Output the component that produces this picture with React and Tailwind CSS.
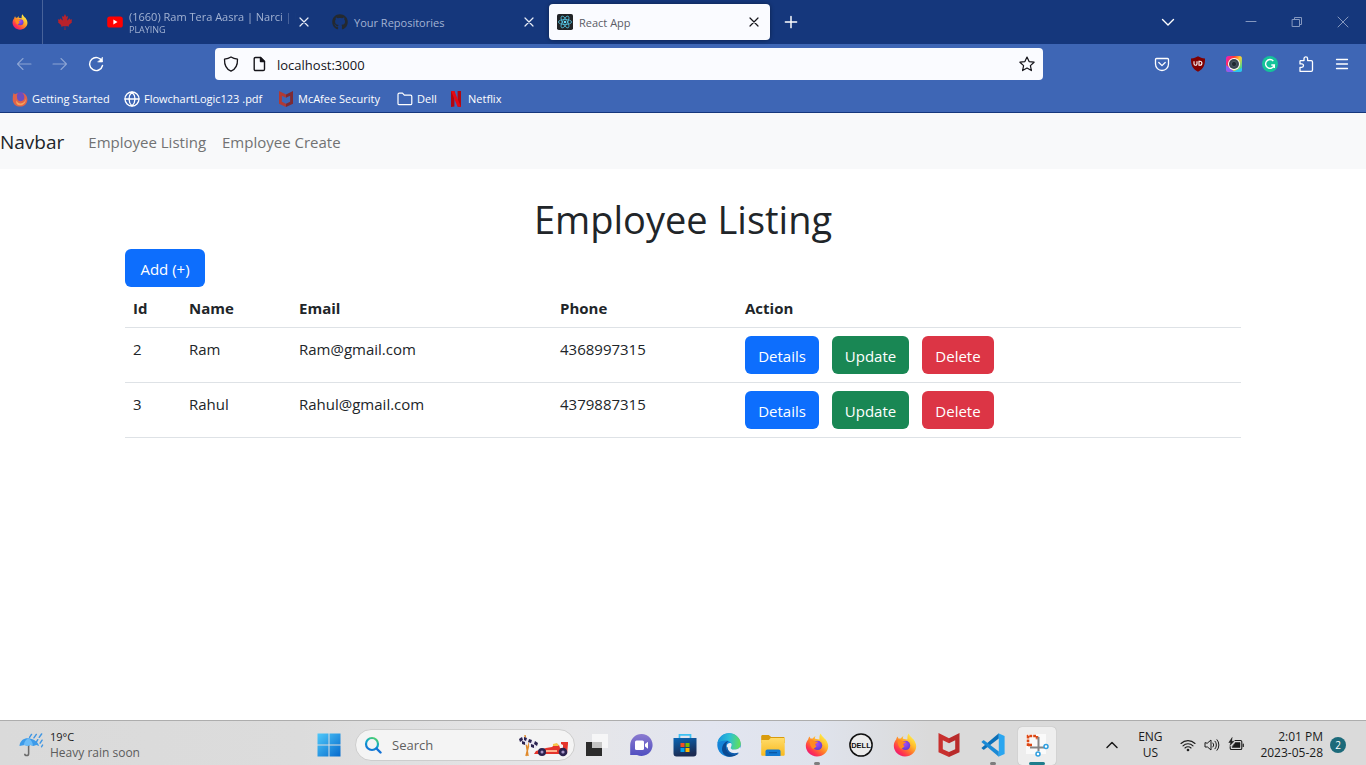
import React, { useId } from "react";
import { FaCanadianMapleLeaf, FaGithub } from "react-icons/fa";

function Firefox({ className }) {
  const id = useId();
  return (
    <svg viewBox="0 0 24 24" className={className} aria-hidden="true">
      <defs>
        <linearGradient id={id + "a"} x1="0.85" y1="0.1" x2="0.15" y2="0.95">
          <stop offset="0" stopColor="#fff04a" />
          <stop offset="0.3" stopColor="#ffbd2e" />
          <stop offset="0.55" stopColor="#ff7a2a" />
          <stop offset="0.8" stopColor="#ff3350" />
          <stop offset="1" stopColor="#e3157e" />
        </linearGradient>
        <radialGradient id={id + "b"} cx="0.45" cy="0.35" r="0.7">
          <stop offset="0" stopColor="#a54bf5" />
          <stop offset="1" stopColor="#5b3ad0" />
        </radialGradient>
      </defs>
      <path d="M3.3 6.2c.2-1.200.8-2.200 1.400-2.700.1 1 .5 1.700 1.100 2.200.5-.2 1.300-.3 2-.2.7-1.200 1.700-1.900 2.700-2.200-.6.9-.7 1.900-.5 2.500l4.400.7c.1-2-.3-3.900 1.300-6 1 2.600 2.700 3.500 3.900 5.300.7-.3 1.100.9 1.100.9 1.500 2 2.500 4.200 2.500 6.600 0 5.700-4.900 10.200-11.200 10.200S.8 18.600.8 12.800c0-2.600 1-4.900 2.500-6.600z" fill={`url(#${id}a)`} />
      <circle cx="12.600" cy="12.400" r="4.600" fill={`url(#${id}b)`} />
      <path d="M4.600 8c2-1.500 4.200-.9 5.400.6l2.900.2c-.1 1.300-1.700 1.600-2.500 2.200-.2.900.3 1.700 1.200 1.900-.6 1.600-2.600 1.900-3.600 3.200C5.600 14.200 4.800 11.200 4.600 8z" fill="#ff8a1f" />
    </svg>
  );
}

function OldFirefox({ className }) {
  return (
    <svg viewBox="0 0 16 16" className={className} aria-hidden="true">
      <circle cx="8.500" cy="7.500" r="6.500" fill="#6b4fc0" />
      <path d="M1.500 2c.6.6 1 .9 1.500 1.200C4 2.500 5 2.300 6 2.600 4.800 3.500 4.700 4.500 5 5.500c-.3 3 1.300 4.700 3.700 4.700 2.700 0 4.100-2.200 3.500-5.200-.3-1.400-1-2.400-2-3.300 3.300.9 5.200 3.600 5.200 6.700 0 4.200-3.200 7.200-7.400 7.200C3.800 15.600.7 12.500.7 8.400.7 6 .9 4 1.500 2z" fill="#e0634a" />
      <path d="M4.500 9.500c1 2.500 3.500 3.500 6 2.500 2-.8 3-2.600 3-4.500 1 3.500-1.600 6.800-5.300 6.800-3 0-4.600-2-3.700-4.800z" fill="#f3a35c" />
    </svg>
  );
}

function YouTube() {
  return (
    <svg viewBox="0 0 16 16" className="size-4 shrink-0" aria-hidden="true">
      <rect x="0.200" y="2.500" width="15.600" height="11" rx="2.600" fill="#f00" />
      <path d="M6.400 5.600v4.800L10.500 8z" fill="#fff" />
    </svg>
  );
}

function ReactLogo() {
  return (
    <svg viewBox="0 0 16 16" className="size-4 shrink-0" aria-hidden="true">
      <rect width="16" height="16" rx="1.800" fill="#222427" />
      <g fill="none" stroke="#53c1de" strokeWidth="0.800">
        <ellipse cx="8" cy="8" rx="6.600" ry="2.500" />
        <ellipse cx="8" cy="8" rx="6.600" ry="2.500" transform="rotate(60 8 8)" />
        <ellipse cx="8" cy="8" rx="6.600" ry="2.500" transform="rotate(120 8 8)" />
      </g>
      <circle cx="8" cy="8" r="1.300" fill="#61dafb" />
    </svg>
  );
}

function Line({ d, className, width = 1.3, box = "0 0 16 16", children }) {
  return (
    <svg viewBox={box} className={className} fill="none" stroke="currentColor" strokeWidth={width} strokeLinecap="round" strokeLinejoin="round" aria-hidden="true">
      <path d={d} />
      {children}
    </svg>
  );
}

const CROSS = "M4 4l8 8M12 4l-8 8";

function McAfee({ className, left = "#c8302e", right = "#a92427" }) {
  return (
    <svg viewBox="0 0 24 24" className={className} aria-hidden="true">
      <path d="M1.500 0L12 5.200v5L5.800 7.300v8.900L12 19v5L1.500 19.200z" fill={left} />
      <path d="M22.500 0L12 5.200v5l6.200-2.900v8.900L12 19v5l10.500-4.800z" fill={right} />
    </svg>
  );
}

function Netflix() {
  return (
    <svg viewBox="0 0 16 16" className="size-4 shrink-0" aria-hidden="true">
      <path d="M3 0h3.400v15.600L3 16zM9.600 0H13v16l-3.400-.4z" fill="#b1060f" />
      <path d="M3 0h3.400L13 16l-3.500-.4z" fill="#e50914" />
    </svg>
  );
}

function Tab({ icon, title, sub, active }) {
  return (
    <div className={"flex h-9 w-[221px] shrink-0 items-center gap-1.5 rounded-[4px] pl-2 pr-2 " + (active ? "bg-[#fafbff] text-[#5b5b66] shadow-[0_0_4px_rgba(0,0,0,0.4)]" : "text-[#a3b3d3]")}>
      {icon}
      <div className={"-mr-1.5 min-w-0 flex-1 whitespace-nowrap text-[11px] " + (sub ? "leading-4 [mask-image:linear-gradient(to_right,#000_90%,transparent)]" : "pt-0.5 leading-4")}>
        <div>{title}</div>
        {sub && <div className="text-[9px] leading-[10px]">{sub}</div>}
      </div>
      <button aria-label={"Close " + title} className={active ? "text-[#15141a]" : "text-[#e8edf7]"}>
        <Line d={CROSS} width={1.2} className="size-4" />
      </button>
    </div>
  );
}

function TabStrip() {
  return (
    <div className="flex h-11 items-center bg-[#15377c]">
      <button aria-label="Firefox View" className="flex h-11 w-[43px] shrink-0 items-center justify-center border-r border-[#48639a] pr-0.5">
        <Firefox className="size-4" />
      </button>
      <button aria-label="Pinned tab" className="mr-3 flex w-11 shrink-0 items-center justify-center">
        <FaCanadianMapleLeaf className="size-4 text-[#b9222b]" />
      </button>
      <div className="flex gap-1">
        <Tab icon={<YouTube />} title="(1660) Ram Tera Aasra | Narci | H" sub="PLAYING" />
        <Tab icon={<FaGithub className="size-4 shrink-0 text-[#24292f]" />} title="Your Repositories" />
        <Tab icon={<ReactLogo />} title="React App" active />
      </div>
      <button aria-label="New tab" className="ml-3 text-white">
        <Line d="M8 3v10M3 8h10" className="size-[18px]" />
      </button>
      <div className="ml-auto flex items-center text-[#8598bf]">
        <button aria-label="List all tabs" className="mr-[37px] flex w-[46px] justify-center text-white">
          <Line d="M2.500 5.500L8 11l5.500-5.500" width={1.4} className="size-4" />
        </button>
        <button aria-label="Minimize" className="flex w-[46px] justify-center">
          <Line d="M3 7.500h10" width={1} className="size-4" />
        </button>
        <button aria-label="Restore" className="flex w-[46px] justify-center">
          <Line d="M3.500 5.500h7v7h-7zM5.500 5.500v-2h7v7h-2" width={1} className="size-4" />
        </button>
        <button aria-label="Close window" className="flex w-[46px] justify-center">
          <Line d="M3 3l10 10M13 3L3 13" width={1} className="size-4" />
        </button>
      </div>
    </div>
  );
}

function ToolButton({ label, children, dim }) {
  return (
    <button aria-label={label} className={"flex h-8 w-9 shrink-0 items-center justify-center " + (dim ? "text-[#8ba3d3]" : "text-white")}>
      {children}
    </button>
  );
}

function Toolbar() {
  const hue = useId();
  return (
    <div className="flex h-9 items-end bg-[#3e66b5] px-1.5">
      <ToolButton label="Back" dim>
        <Line d="M15 8H1.500M7 2.500L1.500 8 7 13.500" width={1.1} className="size-4" />
      </ToolButton>
      <ToolButton label="Forward" dim>
        <Line d="M1 8h13.500M9 2.500L14.500 8 9 13.500" width={1.1} className="size-4" />
      </ToolButton>
      <ToolButton label="Reload">
        <Line d="M14 5.200A6.500 6.500 0 1 0 14.500 9.500" width={1.4} className="size-4">
          <path d="M14.500 1.500v4.500H10z" fill="currentColor" strokeWidth="0.600" />
        </Line>
      </ToolButton>
      <div className="ml-[101px] mr-[101px] flex h-8 flex-1 items-center rounded-[4px] bg-[#fafbff] px-2 text-[#15141a]">
        <Line d="M8 1c2 1.300 4 1.900 6.500 2.200C14.700 8.800 13 13 8 15.200 3 13 1.300 8.800 1.500 3.200 4 2.900 6 2.300 8 1z" className="size-4" />
        <Line d="M4.500 1.500h5l4 4v7.700c0 .8-.5 1.300-1.300 1.300H4.500c-.8 0-1.300-.5-1.300-1.300V2.800c0-.8.5-1.300 1.300-1.300z" width={1.4} className="ml-3 size-4">
          <path d="M9.500 1.500v4h4z" fill="currentColor" />
        </Line>
        <input aria-label="Address" defaultValue="localhost:3000" className="ml-2.5 h-8 min-w-0 flex-1 bg-transparent pt-0.5 text-[13px] outline-none" />
        <button aria-label="Bookmark this page">
          <Line d="M8 1l2.100 4.600 5 .6-3.700 3.400 1 5L8 12.100l-4.400 2.500 1-5L.9 6.200l5-.6z" width={1.2} className="size-4" />
        </button>
      </div>
      <ToolButton label="Pocket">
        <Line d="M2.500 2.500h11c.6 0 1 .4 1 1V8a6.500 6.500 0 0 1-13 0V3.500c0-.6.400-1 1-1zM4.800 6.500L8 9.600l3.200-3.100" className="size-4" />
      </ToolButton>
      <ToolButton label="uBlock">
        <svg viewBox="0 0 16 16" className="size-4" aria-hidden="true">
          <path d="M8 .3c2 1.300 4 2 7 2.200.1 6-1 10-7 13.200C2 12.500.9 8.500 1 2.500 4 2.300 6 1.600 8 .3z" fill="#800000" />
          <path d="M4 5.200v2.600a1.500 1.500 0 0 0 3 0V5.200M9 5.200v4h.9a2 2 0 0 0 0-4z" fill="none" stroke="#fff" strokeWidth="1.100" />
        </svg>
      </ToolButton>
      <ToolButton label="Camera">
        <svg viewBox="0 0 16 16" className="size-4" aria-hidden="true">
          <defs>
            <linearGradient id={hue} x1="0" y1="0.200" x2="1" y2="0.800">
              <stop offset="0" stopColor="#f01fb0" />
              <stop offset="0.300" stopColor="#ff3a30" />
              <stop offset="0.600" stopColor="#ffcf33" />
              <stop offset="1" stopColor="#24d6a0" />
            </linearGradient>
          </defs>
          <rect width="16" height="16" rx="2.500" fill={`url(#${hue})`} />
          <path d="M0 9v4.500A2.500 2.500 0 0 0 2.500 16H9z" fill="#8a5cf6" />
          <path d="M6 16h7.500a2.500 2.500 0 0 0 2.500-2.500V12z" fill="#2bc4f2" />
          <circle cx="8" cy="8" r="6" fill="#fff" />
          <circle cx="8" cy="8" r="5" fill="#3a4450" />
          <circle cx="8" cy="8" r="2.600" fill="#1f2831" stroke="#5d6875" strokeWidth="0.600" />
        </svg>
      </ToolButton>
      <ToolButton label="Grammarly">
        <svg viewBox="0 0 16 16" className="size-4" aria-hidden="true">
          <circle cx="8" cy="8" r="8" fill="#15c39a" />
          <path d="M11.300 5A4.400 4.400 0 1 0 12.300 9H9.300M12.300 9v3" fill="none" stroke="#fff" strokeWidth="1.400" />
        </svg>
      </ToolButton>
      <ToolButton label="Extensions">
        <Line d="M2 15.300v-4h1.800a1.700 1.700 0 0 0 0-3.400H2V5.200c0-.4.200-.6.600-.6H6V2.700a1.800 1.800 0 0 1 3.600 0v1.900h3.600c.8 0 1.300.5 1.300 1.300v8.100c0 .8-.5 1.300-1.300 1.300z" className="size-4" />
      </ToolButton>
      <ToolButton label="Menu">
        <Line d="M2.500 3.500h11M2.500 8h11M2.500 12.500h11" className="size-4" />
      </ToolButton>
    </div>
  );
}

function Bookmark({ icon, label, className }) {
  return (
    <a href="#bookmark" className={"flex shrink-0 items-center gap-1 whitespace-nowrap " + className}>
      {icon}
      {label}
    </a>
  );
}

function Bookmarks() {
  return (
    <nav aria-label="Bookmarks" className="flex h-[33px] items-center border-b border-[#15377c] bg-[#3e66b5] pl-3 pt-1.5 text-[11px] leading-4 text-white">
      <Bookmark className="w-28" icon={<OldFirefox className="size-4 shrink-0" />} label="Getting Started" />
      <Bookmark
        className="w-[154px]"
        icon={
          <Line d="M1 8h14M8 1C4 5 4 11 8 15M8 1c4 4 4 10 0 14" className="size-4 shrink-0">
            <circle cx="8" cy="8" r="7" />
          </Line>
        }
        label="FlowchartLogic123 .pdf"
      />
      <Bookmark className="w-[119px]" icon={<McAfee className="size-4 shrink-0" left="#b03a35" right="#7d2a33" />} label="McAfee Security" />
      <Bookmark
        className="w-[51px]"
        icon={<Line d="M1 3.500c0-.8.500-1.300 1.300-1.300h3.200l1.800 1.900h6.200c.8 0 1.300.5 1.300 1.300v7c0 .8-.5 1.300-1.300 1.300H2.300c-.8 0-1.300-.5-1.300-1.300z" width={1.2} className="size-4 shrink-0" />}
        label="Dell"
      />
      <Bookmark icon={<Netflix />} label="Netflix" className="" />
    </nav>
  );
}

const employees = [
  { id: 2, name: "Ram", email: "Ram@gmail.com", phone: "4368997315" },
  { id: 3, name: "Rahul", email: "Rahul@gmail.com", phone: "4379887315" },
];

const button = "h-[38px] rounded-md pt-0.5 text-center text-white ";

function Page() {
  return (
    <div className="flex-1 bg-white text-[15px] leading-[26px] text-[#212529]">
      <nav className="flex h-14 items-center bg-[#f8f9fa] pt-0.5 text-[#717273]">
        <a href="#home" className="mr-4 text-[19px] text-[#212529]">Navbar</a>
        <a href="#listing" className="px-2">Employee Listing</a>
        <a href="#create" className="px-2">Employee Create</a>
      </nav>
      <main className="mx-auto max-w-[1140px] px-3 pt-6">
        <h1 className="mb-1 text-center text-[38px] leading-[52px]">Employee Listing</h1>
        <button className={button + "block w-20 bg-[#0d6efd]"}>Add (+)</button>
        <table className="w-full table-fixed border-collapse text-left">
          <thead>
            <tr className="border-b border-[#dee2e6] font-bold">
              <th className="w-14 px-2 pt-2 pb-1.5">Id</th>
              <th className="w-[110px] px-2 pt-2 pb-1.5">Name</th>
              <th className="w-[261px] px-2 pt-2 pb-1.5">Email</th>
              <th className="w-[185px] px-2 pt-2 pb-1.5">Phone</th>
              <th className="px-2 pt-2 pb-1.5">Action</th>
            </tr>
          </thead>
          <tbody>
            {employees.map((e) => (
              <tr key={e.id} className="border-b border-[#dee2e6] align-top">
                <td className="p-2">{e.id}</td>
                <td className="p-2">{e.name}</td>
                <td className="p-2">{e.email}</td>
                <td className="p-2">{e.phone}</td>
                <td className="p-2">
                  <div className="flex gap-[13px]">
                    <button className={button + "w-[74px] bg-[#0d6efd]"}>Details</button>
                    <button className={button + "w-[77px] bg-[#198754]"}>Update</button>
                    <button className={button + "w-[72px] bg-[#dc3545]"}>Delete</button>
                  </div>
                </td>
              </tr>
            ))}
          </tbody>
        </table>
      </main>
    </div>
  );
}

function TaskButton({ label, children, active, bar }) {
  return (
    <button aria-label={label} className="relative flex h-11 w-11 shrink-0 items-center justify-center">
      {active && <span className="absolute inset-x-[3px] top-1 bottom-0.5 rounded-[4px] bg-[#eeeeee] shadow-[0_0_1px_#999]" />}
      <span className="relative">{children}</span>
      {bar && <span className={"absolute bottom-0.5 h-[3px] rounded-full " + bar} />}
    </button>
  );
}

function RaceCar() {
  return (
    <svg viewBox="0 0 52 24" className="h-6 w-[52px] shrink-0" aria-hidden="true">
      <path d="M10 23L7 2M8 23l4-16" stroke="#e08a2c" strokeWidth="1.500" fill="none" />
      <path d="M2 4l8 1-1 7-7-3zM11 6l9 4-2 6-7-3z" fill="#e9e5f2" />
      <path d="M1 6l3-2 1 3-3 2zM6 4l3 1-1 3-2-1zM4 8l3 1v3l-3-1zM11 6l3 1-1 3-3-1zM17 8l3 2-1 3-3-2zM13 11l3 1v3l-3-1z" fill="#2b2350" />
      <path d="M16 21l2-3 10-3 6-1 3-3 4 1 1 3h3v-3l-2-1V9h7v2l-1 10z" fill="#e5342b" />
      <path d="M35 11l4-1 2 3h-6z" fill="#f7c64b" />
      <path d="M28 17h11v2H28z" fill="#ffb08c" />
      <circle cx="24" cy="19" r="4" fill="#2b2350" />
      <circle cx="45" cy="19" r="4.300" fill="#2b2350" />
      <circle cx="24" cy="19" r="1.500" fill="#a998c9" />
      <circle cx="45" cy="19" r="1.600" fill="#a998c9" />
    </svg>
  );
}

function Taskbar() {
  const g = useId();
  const ref = (n) => `url(#${g}${n})`;
  return (
    <footer className="grid h-[45px] grid-cols-[1fr_auto_1fr] items-center border-t border-[#adadad] bg-[linear-gradient(to_right,#dadada_0%,#dcdcdc_22%,#e6e6e8_42%,#e2e5f0_52%,#dfe3ec_60%,#dadada_68%,#dadada_100%)] pt-0.5 text-[#1b1b1b]">
      <svg className="absolute size-0" aria-hidden="true">
        <defs>
          <linearGradient id={g + "win"} x1="0" y1="0" x2="1" y2="1">
            <stop offset="0" stopColor="#4fc9fa" />
            <stop offset="1" stopColor="#0669cc" />
          </linearGradient>
          <linearGradient id={g + "lens"} x1="0.800" y1="0" x2="0.300" y2="1">
            <stop offset="0" stopColor="#4fd06a" />
            <stop offset="0.450" stopColor="#0fa8c9" />
            <stop offset="1" stopColor="#1272d6" />
          </linearGradient>
          <linearGradient id={g + "chat"} x1="0" y1="0" x2="0" y2="1">
            <stop offset="0" stopColor="#8b7bd0" />
            <stop offset="1" stopColor="#4f4ec0" />
          </linearGradient>
          <linearGradient id={g + "store"} x1="0" y1="0" x2="0.300" y2="1">
            <stop offset="0" stopColor="#0a66b5" />
            <stop offset="1" stopColor="#1c2b52" />
          </linearGradient>
          <linearGradient id={g + "edge"} x1="0" y1="0.300" x2="1" y2="0.400">
            <stop offset="0" stopColor="#1793dc" />
            <stop offset="0.500" stopColor="#2cc0d6" />
            <stop offset="1" stopColor="#62df58" />
          </linearGradient>
          <linearGradient id={g + "file"} x1="0" y1="0" x2="0" y2="1">
            <stop offset="0" stopColor="#ffdc6b" />
            <stop offset="1" stopColor="#f8b91e" />
          </linearGradient>
        </defs>
      </svg>
      <div className="flex items-center gap-1.5 pl-[19px]">
        <svg viewBox="0 0 26 26" className="size-[25px]" aria-hidden="true">
          <path d="M10 12v9.500a2 2 0 0 1-4 0" fill="none" stroke="#6b6b6b" strokeWidth="1.600" />
          <path d="M.5 13.500C1 8 5 5.500 9 5.500s10 2 12 8l-3-1-3 1-3-1-3 1-3-1z" fill="#3d9be9" />
          <path d="M5 12.500C5.500 9 7 7 9.500 5.500 13 7 14 9.500 14.500 13l-3-.5-2.500 1z" fill="#6bbcf8" />
          <path d="M13 1.500l-2 3M18 1.500l-2.500 3.500M23.500 1l-2.500 3.500M19.500 7l-1.500 2.500M24 7.500l-2 3M24.500 12.500l-1 1.800" stroke="#3f96e3" strokeWidth="1.500" strokeLinecap="round" />
        </svg>
        <div className="text-[11px] leading-4">
          <div>19°C</div>
          <div className="text-[12px] text-[#5c5c5c]">Heavy rain soon</div>
        </div>
      </div>
      <div className="flex items-center pl-2.5">
        <button aria-label="Start" className="mr-3.5">
          <svg viewBox="0 0 24 24" className="size-6" aria-hidden="true">
            <path d="M.5.500h11v11H.5zM12.500.5h11v11h-11zM.5 12.500h11v11H.5zM12.500 12.500h11v11h-11z" fill={ref("win")} />
          </svg>
        </button>
        <div className="flex h-8 w-[220px] items-center rounded-full border border-[#cdcdcd] bg-[#f4f4f4] pl-2 pr-1">
          <svg viewBox="0 0 18 18" className="size-[18px] shrink-0" aria-hidden="true">
            <circle cx="8" cy="8" r="6" fill="none" stroke={ref("lens")} strokeWidth="2.200" />
            <path d="M12.500 12.500l4 4" stroke="#1272d6" strokeWidth="2.400" strokeLinecap="round" />
          </svg>
          <input aria-label="Search" placeholder="Search" className="ml-2.5 h-7 min-w-0 flex-1 bg-transparent text-[13px] outline-none placeholder:text-[#5f5f5f]" />
          <RaceCar />
        </div>
        <TaskButton label="Task view">
          <svg viewBox="0 0 24 24" className="size-6" aria-hidden="true">
            <path d="M1 9h16v14H1z" fill="#2c2c2c" />
            <path d="M7 1h16v14H7z" fill="#f8f8f8" opacity="0.880" />
            <path d="M7 9h10v6H7z" fill="#c4c4c4" />
          </svg>
        </TaskButton>
        <TaskButton label="Chat">
          <svg viewBox="0 0 24 24" className="size-6" aria-hidden="true">
            <path d="M12.500 1a11 11 0 1 1-4.500 21H1.200V12A11.200 11.200 0 0 1 12.500 1z" fill={ref("chat")} />
            <rect x="6" y="7.500" width="9" height="9.500" rx="1.500" fill="#fff" />
            <path d="M16 11l3-2.300v7L16 13.500z" fill="#fff" />
          </svg>
        </TaskButton>
        <TaskButton label="Store">
          <svg viewBox="0 0 24 24" className="size-6" aria-hidden="true">
            <path d="M6.500 6V1.800h11V6" fill="none" stroke="#3ec1f3" strokeWidth="1.700" />
            <path d="M.5 5h23v15.500a3 3 0 0 1-3 3h-17a3 3 0 0 1-3-3z" fill={ref("store")} />
            <path d="M7.500 10h4v4h-4z" fill="#f25022" />
            <path d="M12.500 10h4v4h-4z" fill="#7fba00" />
            <path d="M7.500 15h4v4h-4z" fill="#00a4ef" />
            <path d="M12.500 15h4v4h-4z" fill="#ffb900" />
          </svg>
        </TaskButton>
        <TaskButton label="Edge">
          <svg viewBox="0 0 24 24" className="size-6" aria-hidden="true">
            <circle cx="12" cy="12" r="11.700" fill="#1583d8" />
            <path d="M.5 10C1.500 4.500 6 .3 12 .3c6.500 0 11.700 5 11.700 10.400 0 3.600-3 6-6.200 6-2.300 0-3.800-.8-3.800-1.700 0-.6 1-1 1-2.900 0-2.300-2.200-4.700-5.700-4.700C5 7.400 2 8.600.5 10z" fill={ref("edge")} />
            <path d="M9 12.500c-.6 5 3.500 9.200 8.700 9 1.800-.1 3.500-.9 4.500-1.700-2.200 2.600-6 4-9.700 3.900C8 23.500 5 20 5 16c0-4.500 3.500-7.500 6.500-8C9.700 9.500 9 11 9 12.500z" fill="#0b4a91" />
            <path d="M14.700 11.500c0 2.500-1.500 3-.8 3.900.9 1.200 3.500 1.500 5.600.9 1.400-.4 2.700-1.200 3.500-2.300 1.500 1-.3 5-2.200 6-5.800 2.500-11.300-1.500-11-7.500.3-2.500 4.200-3.500 4.900-1z" fill="#e9ecf4" />
            <path d="M10.500 14c0 4.500 5 7.800 11 5.500l-1.200 1.700c-5 2.300-11-1-10.700-7z" fill="#0f5bab" />
          </svg>
        </TaskButton>
        <TaskButton label="File Explorer">
          <svg viewBox="0 0 24 24" className="size-6" aria-hidden="true">
            <path d="M.2 3.500c0-1 .6-1.500 1.500-1.500h6l2.500 2h12c1 0 1.600.5 1.600 1.500V10H.2z" fill="#d99b0c" />
            <path d="M.2 7h7.500l2-2h14v16.500c0 .8-.5 1.300-1.300 1.300H1.500c-.8 0-1.300-.5-1.300-1.300z" fill={ref("file")} />
            <path d="M4.500 23v-4.500c0-1.300.7-2 2-2h11c1.300 0 2 .7 2 2V23z" fill="#1279d2" />
            <path d="M8 19h8v1.300H8z" fill="#0b57a4" />
          </svg>
        </TaskButton>
        <TaskButton label="Firefox" bar="w-1.5 bg-[#7d7d7d]">
          <Firefox className="size-6" />
        </TaskButton>
        <TaskButton label="Dell">
          <svg viewBox="0 0 24 24" className="size-6" aria-hidden="true">
            <circle cx="12" cy="12" r="11.100" fill="#ececec" stroke="#111" strokeWidth="1.500" />
            <text x="12" y="15" textAnchor="middle" fontSize="7.500" fontWeight="bold" fill="#111" fontFamily="Liberation Sans, sans-serif">DELL</text>
          </svg>
        </TaskButton>
        <TaskButton label="Firefox private">
          <Firefox className="size-6" />
        </TaskButton>
        <TaskButton label="McAfee">
          <McAfee className="size-6" right="#b92b2b" />
        </TaskButton>
        <TaskButton label="Visual Studio Code" bar="w-1.5 bg-[#7d7d7d]">
          <svg viewBox="0 0 24 24" className="size-6" aria-hidden="true">
            <path d="M.4 14.900l1.700 1.700c.4.300.8.300 1.200 0L17.800 5.500V.3L.4 14.900z" fill="#0a6fb8" />
            <path d="M.4 9.100l1.700-1.700c.4-.3.800-.3 1.200 0l14.500 11.100v5.200L.4 9.100z" fill="#1a8ad6" />
            <path d="M17.300.2l6.300 2.900v17.800l-6.300 2.900c.4-.3.500-.6.500-1V1.200c0-.4-.1-.7-.5-1z" fill="#2aa6f0" />
          </svg>
        </TaskButton>
        <TaskButton label="Snipping Tool" active bar="w-4 bg-[#1f7d8c]">
          <svg viewBox="0 0 24 24" className="size-6" aria-hidden="true">
            <rect width="20" height="20" x="1" y="1" fill="#fafafa" />
            <path d="M3 13V3h9v4" fill="none" stroke="#dd4814" strokeWidth="2.600" strokeDasharray="2.800 1" />
            <path d="M3 12h4" stroke="#dd4814" strokeWidth="2.600" />
            <path d="M13.500 4v14M5 14.500h14" stroke="#858585" strokeWidth="2" />
            <circle cx="21" cy="13.500" r="2" fill="#fff" stroke="#2f9fe0" strokeWidth="1.500" />
            <circle cx="13" cy="21" r="2" fill="#fff" stroke="#2f9fe0" strokeWidth="1.500" />
          </svg>
        </TaskButton>
      </div>
      <div className="flex items-center justify-end pr-5 text-[12px] leading-4">
        <button aria-label="Show hidden icons" className="mr-3">
          <Line d="M3 10.500l5-5 5 5" width={1.5} className="size-4" />
        </button>
        <button className="w-9 text-center">
          ENG
          <br />
          US
        </button>
        <button aria-label="Network, volume and battery" className="ml-3 flex gap-2">
          <Line d="M1 6.500a10 10 0 0 1 14 0M3 8.800a7 7 0 0 1 10 0M5 11a4.200 4.200 0 0 1 6 0" width={1.1} className="size-4">
            <circle cx="8" cy="13" r="0.800" fill="currentColor" />
          </Line>
          <Line d="M1 6v4h2.500L7 13V3L3.500 6zM9 6a3 3 0 0 1 0 4M11 4.200a5.500 5.500 0 0 1 0 7.600M13 2.700a8 8 0 0 1 0 10.600" width={1} className="size-4" />
          <Line d="M7 3.500h5.500c.8 0 1.300.5 1.300 1.300v6.400c0 .8-.5 1.300-1.300 1.300h-9c-.8 0-1.300-.5-1.300-1.300V9.500M15.300 7v2.500" width={1.1} className="size-4">
            <path d="M7.500 5.500H12v5H4.200V9.700z" fill="currentColor" strokeWidth="0.500" />
            <path d="M4 .800L.800 5.500h2L2 8.500l4-4.200H3.800z" fill="currentColor" strokeWidth="0.500" />
          </Line>
        </button>
        <div className="ml-4 text-right">
          2:01 PM
          <br />
          2023-05-28
        </div>
        <span className="ml-[7px] flex size-4 items-center justify-center rounded-full bg-[#1c6a7a] text-[10px] text-white">2</span>
      </div>
    </footer>
  );
}

export default function App() {
  return (
    <div className="flex min-h-screen flex-col bg-white font-['Open_Sans','Noto_Sans',sans-serif]">
      <header>
        <TabStrip />
        <Toolbar />
        <Bookmarks />
      </header>
      <Page />
      <Taskbar />
    </div>
  );
}
